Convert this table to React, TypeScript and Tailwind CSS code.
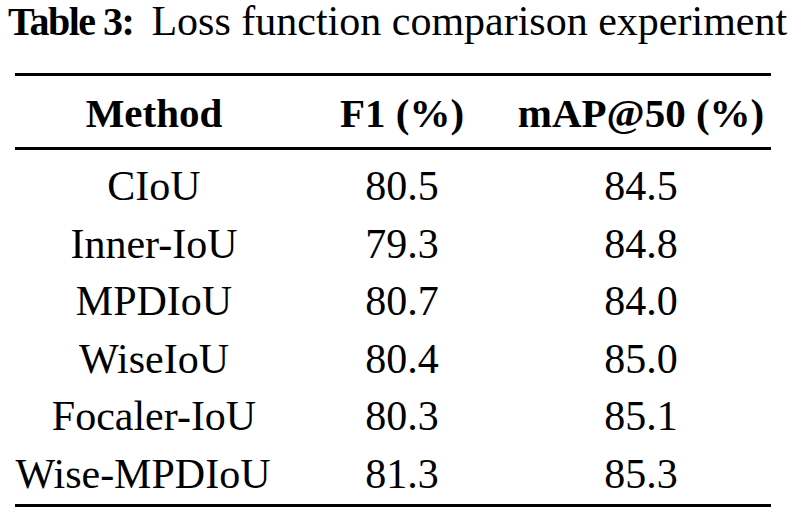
import React from "react";

const rows: [string, string, string, string][] = [
  ["CIoU", "80.5", "84.5", ""],
  ["Inner-IoU", "79.3", "84.8", ""],
  ["MPDIoU", "80.7", "84.0", ""],
  ["WiseIoU", "80.4", "85.0", ""],
  ["Focaler-IoU", "80.3", "85.1", ""],
  ["Wise-MPDIoU", "81.3", "85.3", "pr-[22px]"],
];

export default function App() {
  return (
    <div
      className="w-[788px] h-[515px] bg-white text-black overflow-hidden"
      style={{ fontFamily: '"Liberation Serif", "Times New Roman", serif' }}
    >
      <div className="h-[41px] pl-[8px] pt-[1px] flex items-baseline whitespace-nowrap">
        <span className="font-bold text-[40px] leading-[40px] tracking-[-1.5px]">Table 3:</span>
        <span className="ml-[18px] text-[42px] leading-[40px]">Loss function comparison experiment</span>
      </div>
      <div className="ml-[15px] w-[756px] mt-[32px] border-t-[3px] border-b-[3px] border-black">
        <div className="grid grid-cols-[278px_218px_260px] border-b-[3px] border-black pt-[15px] pb-[11px] text-[41px] leading-[45px] font-bold text-center whitespace-nowrap">
          <div>Method</div>
          <div>F1 (%)</div>
          <div>mAP@50 (%)</div>
        </div>
        <div className="pt-[8px]">
          {rows.map((r) => (
            <div
              key={r[0]}
              className="grid grid-cols-[278px_218px_260px] text-[42px] leading-[57.6px] text-center whitespace-nowrap"
            >
              <div className={r[3]}>{r[0]}</div>
              <div>{r[1]}</div>
              <div>{r[2]}</div>
            </div>
          ))}
        </div>
      </div>
    </div>
  );
}
